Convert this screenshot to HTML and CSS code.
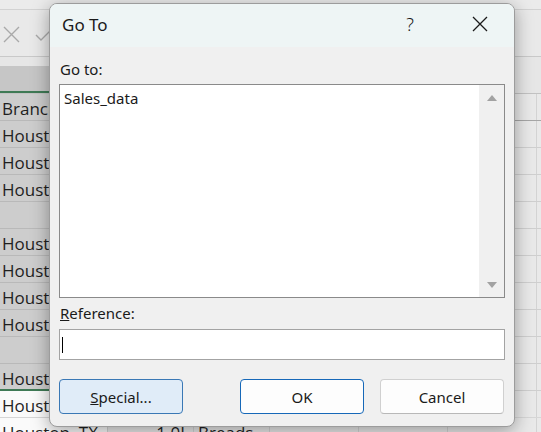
FILE: index.html
```html
<!DOCTYPE html>
<html>
<head>
<meta charset="utf-8">
<link rel="stylesheet" href="styles.css">
</head>
<body>
<div class="sheet">
  <div class="strip"></div>
  <div class="formula">
    <svg class="fx" width="60" height="20" viewBox="0 0 60 20">
      <path d="M3 3 L18 18 M18 3 L3 18" stroke="#a9a9a9" stroke-width="1.4" fill="none"/>
      <path d="M35 11 L40 16 L50 6" stroke="#a9a9a9" stroke-width="1.4" fill="none"/>
    </svg>
  </div>
  <div class="colhead"><div class="hA"></div><div class="hRest"></div></div>
  <div class="row sel dark"><div class="c a">Branch</div><div class="c b"></div><div class="c w70"></div><div class="c w89"></div><div class="c w89"></div><div class="c w89"></div><div class="c rest"></div></div>
  <div class="row sel"><div class="c a">Houston, TX</div><div class="c b"></div><div class="c w70"></div><div class="c w89"></div><div class="c w89"></div><div class="c w89"></div><div class="c rest"></div></div>
  <div class="row sel"><div class="c a">Houston, TX</div><div class="c b"></div><div class="c w70"></div><div class="c w89"></div><div class="c w89"></div><div class="c w89"></div><div class="c rest"></div></div>
  <div class="row sel"><div class="c a">Houston, TX</div><div class="c b"></div><div class="c w70"></div><div class="c w89"></div><div class="c w89"></div><div class="c w89"></div><div class="c rest"></div></div>
  <div class="row sel"><div class="c a"></div><div class="c b"></div><div class="c w70"></div><div class="c w89"></div><div class="c w89"></div><div class="c w89"></div><div class="c rest"></div></div>
  <div class="row sel"><div class="c a">Houston, TX</div><div class="c b"></div><div class="c w70"></div><div class="c w89"></div><div class="c w89"></div><div class="c w89"></div><div class="c rest"></div></div>
  <div class="row sel"><div class="c a">Houston, TX</div><div class="c b"></div><div class="c w70"></div><div class="c w89"></div><div class="c w89"></div><div class="c w89"></div><div class="c rest"></div></div>
  <div class="row sel"><div class="c a">Houston, TX</div><div class="c b"></div><div class="c w70"></div><div class="c w89"></div><div class="c w89"></div><div class="c w89"></div><div class="c rest"></div></div>
  <div class="row sel"><div class="c a">Houston, TX</div><div class="c b"></div><div class="c w70"></div><div class="c w89"></div><div class="c w89"></div><div class="c w89"></div><div class="c rest"></div></div>
  <div class="row sel"><div class="c a"></div><div class="c b"></div><div class="c w70"></div><div class="c w89"></div><div class="c w89"></div><div class="c w89"></div><div class="c rest"></div></div>
  <div class="row sel green"><div class="c a">Houston, TX</div><div class="c b"></div><div class="c w70"></div><div class="c w89"></div><div class="c w89"></div><div class="c w89"></div><div class="c rest"></div></div>
  <div class="row plain"><div class="c a">Houston, TX</div><div class="c b"></div><div class="c w70"></div><div class="c w89"></div><div class="c w89"></div><div class="c w89"></div><div class="c rest"></div></div>
  <div class="row plain"><div class="c a">Houston, TX</div><div class="c b num">1.0L</div><div class="c w70">Breads</div><div class="c w89"></div><div class="c w89"></div><div class="c w89"></div><div class="c rest"></div></div>
</div>

<div class="dialog">
  <div class="titlebar">
    <span class="title">Go To</span>
    <span class="help">?</span>
    <svg class="close" width="16" height="16" viewBox="0 0 16 16">
      <path d="M1 1 L15 15 M15 1 L1 15" stroke="#1a1a1a" stroke-width="1.3" fill="none"/>
    </svg>
  </div>
  <div class="body">
    <div class="label">Go to:</div>
    <div class="list">
      <div class="items"><div class="item">Sales_data</div></div>
      <div class="scroll">
        <svg width="12" height="8" viewBox="0 0 12 8"><path d="M1 7 L6 1 L11 7 Z" fill="#a2a2a2"/></svg>
        <svg width="12" height="8" viewBox="0 0 12 8"><path d="M1 1 L6 7 L11 1 Z" fill="#a2a2a2"/></svg>
      </div>
    </div>
    <div class="label ref"><u>R</u>eference:</div>
    <div class="input"><span class="caret"></span></div>
    <div class="buttons">
      <div class="btn special"><u>S</u>pecial...</div>
      <div class="btn ok">OK</div>
      <div class="btn cancel">Cancel</div>
    </div>
  </div>
</div>
</body>
</html>
```

FILE: styles.css
```css
html, body {
  margin: 0;
  padding: 0;
}
body {
  width: 541px;
  height: 432px;
  overflow: hidden;
  position: relative;
  background: #e8e8e8;
  font-family: "Noto Sans", "Open Sans", sans-serif;
}
.sheet {
  display: flex;
  flex-direction: column;
  width: 541px;
}
.strip {
  height: 9px;
  background: #ebebeb;
  border-bottom: 1px solid #d2d2d2;
}
.formula {
  height: 46px;
  background: #e9e9e9;
  border-bottom: 1px solid #c9c9c9;
  display: flex;
  align-items: center;
}
.fx {
  margin-left: 1px;
  margin-top: 2px;
}
.colhead {
  height: 37px;
  display: flex;
  background: #e6e6e6;
  box-sizing: border-box;
  border-bottom: 1px solid #c2c2c2;
}
.hA {
  width: 108px;
  margin-top: 9px;
  background: #c6c6c6;
  border-bottom: 2px solid #3f7a55;
}
.hRest {
  flex: 1;
}
.row {
  display: flex;
  height: 27px;
  box-sizing: border-box;
  border-bottom: 1px solid #cfcfcf;
  background: #e9e9e9;
  font-family: "Open Sans", "Noto Sans", sans-serif;
  font-size: 17px;
  color: #1f1f1f;
}
.c {
  box-sizing: border-box;
  flex-shrink: 0;
  border-right: 1px solid #d3d3d3;
  white-space: nowrap;
  overflow: hidden;
  line-height: 26px;
  padding-top: 2px;
  padding-left: 2px;
}
.a { width: 108px; }
.b { width: 86px; }
.w70 { width: 76px; }
.w89 { width: 89px; }
.rest { flex: 1; border-right: none; }
.sel .a {
  background: #cdcdcd;
  border-bottom: 1px solid #b9b9b9;
  margin-bottom: -1px;
}
.dark {
  border-bottom-color: #a6a6a6;
}
.green .a {
  border-bottom: 2px solid #3f7a55;
}
.plain .a {
  background: #fafafa;
}
.plain {
  border-bottom-color: #d6d6d6;
}
.num {
  text-align: right;
  padding-right: 4px;
}
.num + .c {
  padding-left: 4px;
}

.dialog {
  position: absolute;
  left: 49px;
  top: 3px;
  width: 466px;
  height: 424px;
  box-sizing: border-box;
  border: 1px solid #9c9c9c;
  border-radius: 8px;
  background: #f0f0f0;
  overflow: hidden;
  display: flex;
  flex-direction: column;
  box-shadow: 0 4px 18px rgba(0, 0, 0, 0.35);
}
.titlebar {
  height: 43px;
  background: #eef5f5;
  display: flex;
  align-items: center;
  padding-left: 12px;
  flex-shrink: 0;
}
.title {
  font-size: 17px;
  color: #1a1a1a;
  flex: 1;
  margin-top: -2px;
}
.help {
  font-size: 18px;
  color: #1a1a1a;
  margin-right: 58px;
  margin-top: -4px;
  font-weight: 300;
}
.close {
  margin-right: 26px;
  margin-top: -4px;
}
.body {
  flex: 1;
  display: flex;
  flex-direction: column;
  padding: 0 9px 12px 9px;
  font-size: 15px;
  color: #1a1a1a;
}
.label {
  height: 20px;
  line-height: 20px;
  margin-top: 12px;
  margin-bottom: 5px;
  padding-left: 1px;
}
.label.ref {
  margin-top: 5px;
  margin-bottom: 6px;
}
.list {
  height: 214px;
  box-sizing: border-box;
  border: 1px solid #8a8a8a;
  background: #ffffff;
  display: flex;
}
.items {
  flex: 1;
  padding: 3px 4px;
}
.item {
  line-height: 20px;
}
.scroll {
  width: 25px;
  background: #f0f0f0;
  display: flex;
  flex-direction: column;
  align-items: center;
  justify-content: space-between;
  padding: 9px 0 8px 0;
}
.input {
  height: 31px;
  box-sizing: border-box;
  border: 1px solid #a3a3a3;
  background: #ffffff;
  display: flex;
  align-items: center;
  padding-left: 2px;
}
.caret {
  width: 1px;
  height: 16px;
  background: #000;
}
.buttons {
  display: flex;
  margin-top: 19px;
  gap: 16px;
}
.btn {
  width: 124px;
  height: 35px;
  box-sizing: border-box;
  border-radius: 4px;
  display: flex;
  align-items: center;
  justify-content: center;
  font-size: 15px;
  color: #1a1a1a;
}
.special {
  background: #e0ecf8;
  border: 1px solid #3a78b5;
  margin-right: 41px;
}
.ok {
  background: #fdfdfd;
  border: 1px solid #1668b8;
}
.cancel {
  background: #fdfdfd;
  border: 1px solid #d0d0d0;
  border-bottom-color: #b8b8b8;
}
```
